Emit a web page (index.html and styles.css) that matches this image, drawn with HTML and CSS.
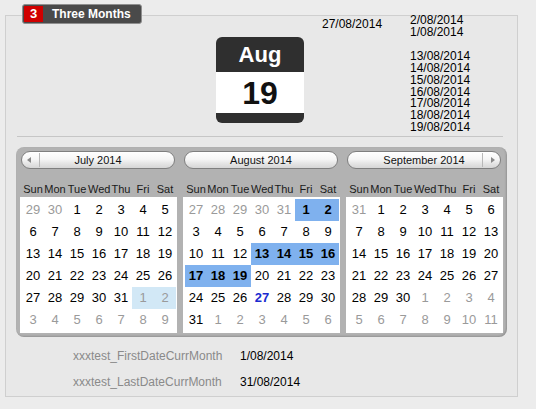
FILE: index.html
```html
<!DOCTYPE html>
<html>
<head>
<meta charset="utf-8">
<link rel="stylesheet" href="styles.css">
</head>
<body>
<div class="page">
  <div class="tab"><span class="tab-num">3</span><span class="tab-label">Three Months</span></div>
  <div class="box">
    <div class="top">
      <div class="icon">
        <div class="icon-month">Aug</div>
        <div class="icon-day">19</div>
        <div class="icon-foot"></div>
      </div>
      <div class="col1">27/08/2014</div>
      <div class="col2">
        <div>2/08/2014</div>
        <div>1/08/2014</div>
        <div class="gap"></div>
        <div>13/08/2014</div>
        <div>14/08/2014</div>
        <div>15/08/2014</div>
        <div>16/08/2014</div>
        <div>17/08/2014</div>
        <div>18/08/2014</div>
        <div>19/08/2014</div>
      </div>
    </div>
    <div class="sep"></div>
    <div class="cal">
      <div class="month">
        <div class="pill"><span class="nav prev"><i class="arr-l"></i></span><span class="title">July 2014</span><span class="nav"></span></div>
        <div class="wk"><span>Sun</span><span>Mon</span><span>Tue</span><span>Wed</span><span>Thu</span><span>Fri</span><span>Sat</span></div>
        <div class="grid">
          <span class="o">29</span><span class="o">30</span><span>1</span><span>2</span><span>3</span><span>4</span><span>5</span>
          <span>6</span><span>7</span><span>8</span><span>9</span><span>10</span><span>11</span><span>12</span>
          <span>13</span><span>14</span><span>15</span><span>16</span><span>17</span><span>18</span><span>19</span>
          <span>20</span><span>21</span><span>22</span><span>23</span><span>24</span><span>25</span><span>26</span>
          <span>27</span><span>28</span><span>29</span><span>30</span><span>31</span><span class="o nx">1</span><span class="o nx">2</span>
          <span class="o">3</span><span class="o">4</span><span class="o">5</span><span class="o">6</span><span class="o">7</span><span class="o">8</span><span class="o">9</span>
        </div>
      </div>
      <div class="month">
        <div class="pill"><span class="nav"></span><span class="title">August 2014</span><span class="nav"></span></div>
        <div class="wk"><span>Sun</span><span>Mon</span><span>Tue</span><span>Wed</span><span>Thu</span><span>Fri</span><span>Sat</span></div>
        <div class="grid">
          <span class="o">27</span><span class="o">28</span><span class="o">29</span><span class="o">30</span><span class="o">31</span><span class="s">1</span><span class="s">2</span>
          <span>3</span><span>4</span><span>5</span><span>6</span><span>7</span><span>8</span><span>9</span>
          <span>10</span><span>11</span><span>12</span><span class="s">13</span><span class="s">14</span><span class="s">15</span><span class="s">16</span>
          <span class="s">17</span><span class="s">18</span><span class="s">19</span><span>20</span><span>21</span><span>22</span><span>23</span>
          <span>24</span><span>25</span><span>26</span><span class="today">27</span><span>28</span><span>29</span><span>30</span>
          <span>31</span><span class="o">1</span><span class="o">2</span><span class="o">3</span><span class="o">4</span><span class="o">5</span><span class="o">6</span>
        </div>
      </div>
      <div class="month">
        <div class="pill"><span class="nav"></span><span class="title">September 2014</span><span class="nav next"><i class="arr-r"></i></span></div>
        <div class="wk"><span>Sun</span><span>Mon</span><span>Tue</span><span>Wed</span><span>Thu</span><span>Fri</span><span>Sat</span></div>
        <div class="grid">
          <span class="o">31</span><span>1</span><span>2</span><span>3</span><span>4</span><span>5</span><span>6</span>
          <span>7</span><span>8</span><span>9</span><span>10</span><span>11</span><span>12</span><span>13</span>
          <span>14</span><span>15</span><span>16</span><span>17</span><span>18</span><span>19</span><span>20</span>
          <span>21</span><span>22</span><span>23</span><span>24</span><span>25</span><span>26</span><span>27</span>
          <span>28</span><span>29</span><span>30</span><span class="o">1</span><span class="o">2</span><span class="o">3</span><span class="o">4</span>
          <span class="o">5</span><span class="o">6</span><span class="o">7</span><span class="o">8</span><span class="o">9</span><span class="o">10</span><span class="o">11</span>
        </div>
      </div>
    </div>
    <div class="info">
      <div class="info-row"><span class="lbl">xxxtest_FirstDateCurrMonth</span><span class="val">1/08/2014</span></div>
      <div class="info-row"><span class="lbl">xxxtest_LastDateCurrMonth</span><span class="val">31/08/2014</span></div>
    </div>
  </div>
</div>
</body>
</html>
```

FILE: styles.css
```css
html, body {
  margin: 0;
  padding: 0;
}
body {
  background: #ececec;
  font-family: "Liberation Sans", Arial, Helvetica, sans-serif;
  width: 536px;
  height: 409px;
  overflow: hidden;
  color: #000;
}
.page {
  position: relative;
  padding: 15px 0 0 5px;
}
.tab {
  position: absolute;
  left: 22px;
  top: 4px;
  width: 120px;
  height: 20px;
  box-sizing: border-box;
  border: 1px solid #8f8f8f;
  border-radius: 3px;
  background: #4a4a4a;
  padding: 1px;
  display: flex;
  align-items: center;
}
.tab-num {
  width: 19px;
  height: 16px;
  background: #d00000;
  color: #fff;
  font-weight: bold;
  font-size: 13px;
  line-height: 16px;
  text-align: center;
}
.tab-label {
  margin-left: 9px;
  color: #fff;
  font-weight: bold;
  font-size: 12px;
  line-height: 16px;
}
.box {
  width: 513px;
  height: 382px;
  box-sizing: border-box;
  border: 1px solid #cfcfcf;
  background: #e8e8e8;
}
.top {
  display: flex;
  align-items: flex-start;
  height: 120px;
}
.icon {
  margin: 21px 0 0 210px;
  width: 88px;
  height: 86px;
  border-radius: 6px;
  overflow: hidden;
  background: #2f2f2f;
  display: flex;
  flex-direction: column;
}
.icon-month {
  height: 35px;
  color: #fff;
  font-weight: bold;
  font-size: 22px;
  line-height: 35px;
  text-align: center;
}
.icon-day {
  height: 41px;
  background: #fff;
  color: #111;
  font-weight: bold;
  font-size: 32px;
  line-height: 42px;
  text-align: center;
}
.icon-foot {
  height: 10px;
}
.col1 {
  margin: 2px 0 0 18px;
  width: 88px;
  font-size: 12px;
  line-height: 12px;
}
.col2 {
  margin-top: -1px;
  font-size: 12px;
  line-height: 11.7px;
}
.col2 .gap {
  height: 13px;
}
.sep {
  margin-left: 11px;
  width: 486px;
  height: 1px;
  background: #c6c6c6;
}
.cal {
  margin: 10px 0 0 10px;
  width: 491px;
  height: 190px;
  box-sizing: border-box;
  padding: 4px;
  background: #b2b2b2;
  border-radius: 8px;
  box-shadow: inset -1px -1px 2px rgba(0, 0, 0, 0.18);
  display: flex;
  gap: 6px;
}
.month {
  width: 157px;
  display: flex;
  flex-direction: column;
}
.pill {
  margin-left: 1px;
  width: 154px;
  height: 18px;
  box-sizing: border-box;
  border: 1px solid #7f7f7f;
  border-radius: 9px;
  background: linear-gradient(to bottom, #ffffff 0%, #f6f6f6 45%, #e6e6e6 70%, #d6d6d6 100%);
  box-shadow: inset 0 1px 0 #fff;
  display: grid;
  grid-template-columns: 18px 1fr 18px;
  align-items: center;
}
.title {
  text-align: center;
  font-size: 11px;
  line-height: 16px;
  color: #111;
}
.nav {
  height: 14px;
  display: flex;
  align-items: center;
}
.nav.prev {
  border-right: 1px solid #b8b8b8;
  padding-left: 5px;
}
.nav.next {
  border-left: 1px solid #b8b8b8;
  padding-left: 8px;
}
.arr-l {
  width: 0;
  height: 0;
  border-top: 3.5px solid transparent;
  border-bottom: 3.5px solid transparent;
  border-right: 4px solid #8a8a8a;
}
.arr-r {
  width: 0;
  height: 0;
  border-top: 3.5px solid transparent;
  border-bottom: 3.5px solid transparent;
  border-left: 4px solid #8a8a8a;
}
.wk {
  margin-top: 12px;
  padding-left: 2px;
  height: 16px;
  display: grid;
  grid-template-columns: repeat(7, 22px);
  font-size: 11px;
  line-height: 16px;
  text-align: center;
  color: #1a1a1a;
  white-space: nowrap;
}
.grid {
  background: #fff;
  padding: 2px 1px 2px 2px;
  display: grid;
  grid-template-columns: repeat(7, 22px);
  grid-auto-rows: 22px;
  font-size: 13px;
  line-height: 22px;
  text-align: center;
}
.grid span {
  color: #000;
}
.grid .o {
  color: #9a9a9a;
}
.grid .nx {
  background: #d2e8f6;
}
.grid .s {
  background: #7fb1ee;
  font-weight: bold;
}
.grid .today {
  color: #1a2ad0;
  font-weight: bold;
}
.info {
  margin-top: 12px;
  padding-left: 67px;
  display: flex;
  flex-direction: column;
  gap: 12px;
}
.info-row {
  display: flex;
  font-size: 12px;
  line-height: 14px;
}
.lbl {
  width: 167px;
  color: #8a8a8a;
}
.val {
  color: #000;
}
```
